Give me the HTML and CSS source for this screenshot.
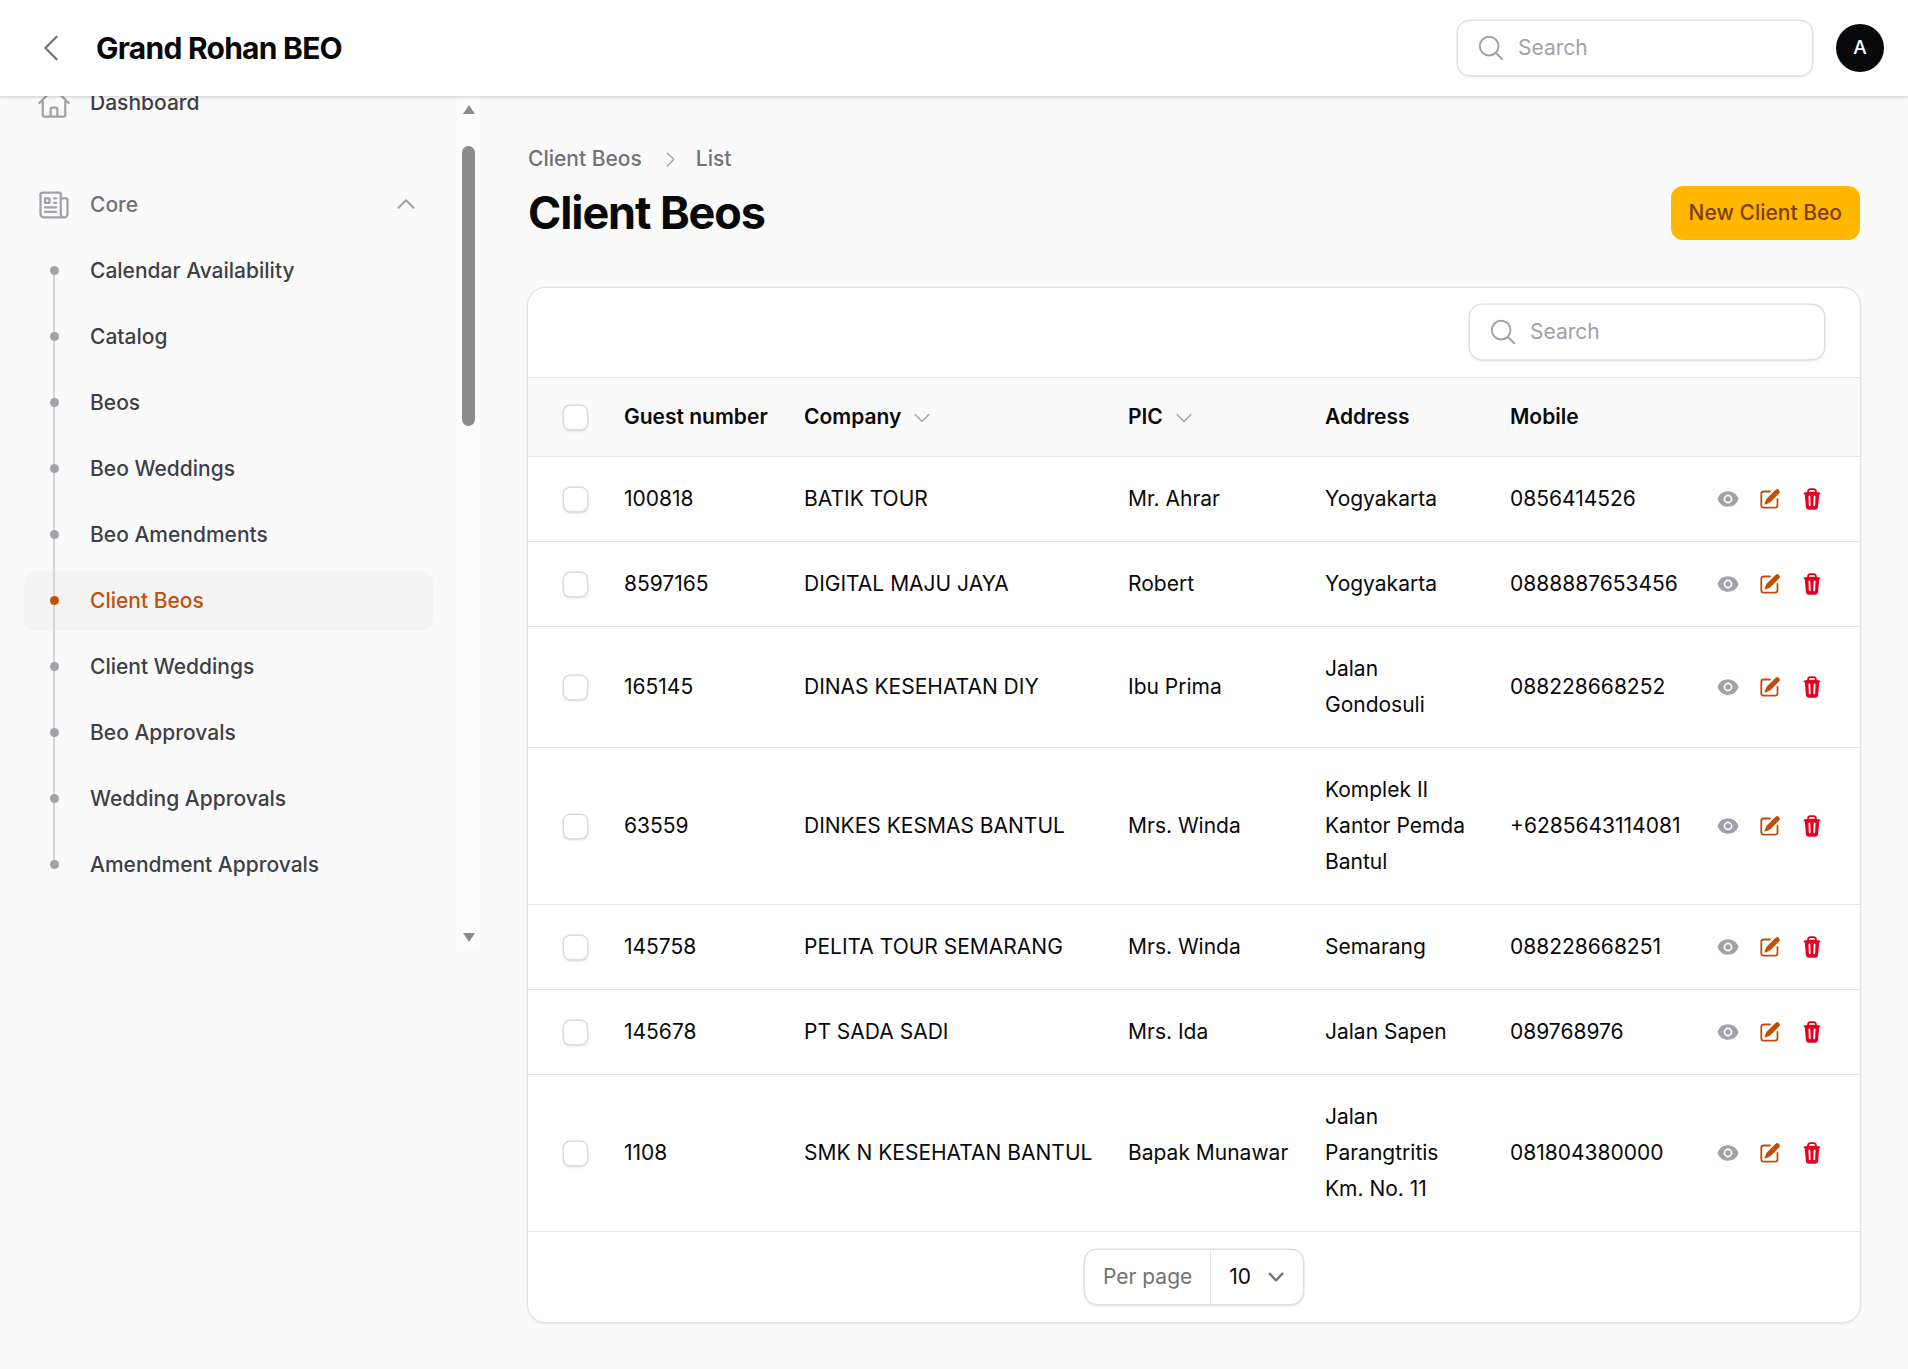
FILE: index.html
```html
<!DOCTYPE html>
<html lang="en">
<head>
    <meta charset="UTF-8">
    <meta name="viewport" content="width=device-width, initial-scale=1.0">
    <title>Client Beos - Grand Rohan BEO</title>
    <link rel="stylesheet" href="styles.css">
</head>
<body>
    <svg class="icon-defs" aria-hidden="true">
        <symbol id="i-search" viewBox="0 0 24 24"><path fill="none" stroke="currentColor" stroke-width="1.5" stroke-linecap="round" stroke-linejoin="round" d="M21 21l-5.197-5.197m0 0A7.5 7.5 0 105.196 5.196a7.5 7.5 0 0010.607 10.607z"/></symbol>
        <symbol id="i-down" viewBox="0 0 24 24"><path fill="none" stroke="currentColor" stroke-width="1.5" stroke-linecap="round" stroke-linejoin="round" d="M19.5 8.25l-7.5 7.5-7.5-7.5"/></symbol>
        <symbol id="i-eye" viewBox="0 0 20 20"><path fill="currentColor" d="M10 12.5a2.5 2.5 0 100-5 2.5 2.5 0 000 5z"/><path fill="currentColor" fill-rule="evenodd" d="M.664 10.59a1.651 1.651 0 010-1.186A10.004 10.004 0 0110 3c4.257 0 7.893 2.66 9.336 6.41.147.381.146.804 0 1.186A10.004 10.004 0 0110 17c-4.257 0-7.893-2.66-9.336-6.41zM14 10a4 4 0 11-8 0 4 4 0 018 0z"/></symbol>
        <symbol id="i-edit" viewBox="0 0 20 20"><path fill="currentColor" d="M5.433 13.917l1.262-3.155A4 4 0 017.58 9.42l6.92-6.918a2.121 2.121 0 013 3l-6.92 6.918c-.383.383-.84.685-1.343.886l-3.154 1.262a.5.5 0 01-.65-.65z"/><path fill="currentColor" d="M3.5 5.75c0-.69.56-1.25 1.25-1.25H10A.75.75 0 0010 3H4.75A2.75 2.75 0 002 5.75v9.5A2.75 2.75 0 004.75 18h9.5A2.75 2.75 0 0017 15.25V10a.75.75 0 00-1.5 0v5.25c0 .69-.56 1.25-1.25 1.25h-9.5c-.69 0-1.25-.56-1.25-1.25v-9.5z"/></symbol>
        <symbol id="i-trash" viewBox="0 0 20 20"><path fill="currentColor" fill-rule="evenodd" d="M8.75 1A2.75 2.75 0 006 3.75v.443c-.795.077-1.584.176-2.365.298a.75.75 0 10.23 1.482l.149-.022.841 10.518A2.75 2.75 0 007.596 19h4.807a2.75 2.75 0 002.742-2.53l.841-10.52.149.023a.75.75 0 00.23-1.482A41.03 41.03 0 0014 4.193V3.75A2.75 2.75 0 0011.25 1h-2.5zM10 4c.84 0 1.673.025 2.5.075V3.75c0-.69-.56-1.25-1.25-1.25h-2.5c-.69 0-1.25.56-1.25 1.25v.325C8.327 4.025 9.16 4 10 4zM8.58 7.72a.75.75 0 00-1.5.06l.3 7.5a.75.75 0 101.5-.06l-.3-7.5zm4.34.06a.75.75 0 10-1.5-.06l-.3 7.5a.75.75 0 101.5.06l.3-7.5z"/></symbol>
    </svg>

    <header class="topbar">
        <svg class="back-icon" viewBox="0 0 24 24"><path fill="none" stroke="currentColor" stroke-width="1.5" stroke-linecap="round" stroke-linejoin="round" d="M15.75 19.5L8.25 12l7.5-7.5"/></svg>
        <div class="brand">Grand Rohan BEO</div>
        <div class="search-box">
            <svg class="search-icon"><use href="#i-search"/></svg>
            <span>Search</span>
        </div>
        <div class="avatar">A</div>
    </header>

    <div class="layout">
        <aside class="sidebar">
            <nav class="side-nav">
                <a class="nav-top">
                    <svg class="nav-icon" viewBox="0 0 24 24"><path fill="none" stroke="currentColor" stroke-width="1.5" stroke-linecap="round" stroke-linejoin="round" d="M2.25 12l8.954-8.955c.44-.439 1.152-.439 1.591 0L21.75 12M4.5 9.75v10.125c0 .621.504 1.125 1.125 1.125H9.75v-4.875c0-.621.504-1.125 1.125-1.125h2.25c.621 0 1.125.504 1.125 1.125V21h4.125c.621 0 1.125-.504 1.125-1.125V9.75M8.25 21h8.25"/></svg>
                    <span>Dashboard</span>
                </a>
                <div class="nav-group-head">
                    <svg class="nav-icon" viewBox="0 0 24 24"><path fill="none" stroke="currentColor" stroke-width="1.5" stroke-linecap="round" stroke-linejoin="round" d="M12 7.5h1.5m-1.5 3h1.5m-7.5 3h7.5m-7.5 3h7.5m3-9h3.375c.621 0 1.125.504 1.125 1.125V18a2.25 2.25 0 01-2.25 2.25M16.5 7.5V18a2.25 2.25 0 002.25 2.25M16.5 7.5V4.875c0-.621-.504-1.125-1.125-1.125H4.125C3.504 3.75 3 4.254 3 4.875V18a2.25 2.25 0 002.25 2.25h13.5M6 7.5h3v3H6v-3z"/></svg>
                    <span>Core</span>
                    <svg class="group-chevron" viewBox="0 0 24 24"><path fill="none" stroke="currentColor" stroke-width="2" stroke-linecap="round" stroke-linejoin="round" d="M4.5 15.75l7.5-7.5 7.5 7.5"/></svg>
                </div>
                <ul class="nav-list">
                    <li class="nav-item">Calendar Availability</li>
                    <li class="nav-item">Catalog</li>
                    <li class="nav-item">Beos</li>
                    <li class="nav-item">Beo Weddings</li>
                    <li class="nav-item">Beo Amendments</li>
                    <li class="nav-item active">Client Beos</li>
                    <li class="nav-item">Client Weddings</li>
                    <li class="nav-item">Beo Approvals</li>
                    <li class="nav-item">Wedding Approvals</li>
                    <li class="nav-item">Amendment Approvals</li>
                </ul>
            </nav>
            <div class="side-scroll">
                <div class="arrow-up"></div>
                <div class="scroll-thumb"></div>
                <div class="arrow-down"></div>
            </div>
        </aside>

        <main class="content">
            <div class="breadcrumb">
                <span>Client Beos</span>
                <svg viewBox="0 0 24 24"><path fill="none" stroke="currentColor" stroke-width="1.5" stroke-linecap="round" stroke-linejoin="round" d="M8.25 4.5l7.5 7.5-7.5 7.5"/></svg>
                <span>List</span>
            </div>
            <div class="page-head">
                <h1>Client Beos</h1>
                <button class="btn-new">New Client Beo</button>
            </div>

            <section class="card">
                <div class="card-toolbar">
                    <div class="search-box">
                        <svg class="search-icon"><use href="#i-search"/></svg>
                        <span>Search</span>
                    </div>
                </div>
                <table class="data-table">
                    <colgroup>
                        <col class="c-check"><col class="c-guest"><col class="c-company"><col class="c-pic"><col class="c-address"><col class="c-mobile"><col class="c-actions">
                    </colgroup>
                    <thead>
                        <tr>
                            <th><span class="checkbox"></span></th>
                            <th>Guest number</th>
                            <th><span class="sort">Company <svg><use href="#i-down"/></svg></span></th>
                            <th><span class="sort">PIC <svg><use href="#i-down"/></svg></span></th>
                            <th>Address</th>
                            <th>Mobile</th>
                            <th></th>
                        </tr>
                    </thead>
                    <tbody>
                        <tr>
                            <td><span class="checkbox"></span></td>
                            <td>100818</td>
                            <td class="nowrap">BATIK TOUR</td>
                            <td>Mr. Ahrar</td>
                            <td>Yogyakarta</td>
                            <td class="nowrap">0856414526</td>
                            <td><div class="actions"><svg class="a-view"><use href="#i-eye"/></svg><svg class="a-edit"><use href="#i-edit"/></svg><svg class="a-del"><use href="#i-trash"/></svg></div></td>
                        </tr>
                        <tr>
                            <td><span class="checkbox"></span></td>
                            <td>8597165</td>
                            <td class="nowrap">DIGITAL MAJU JAYA</td>
                            <td>Robert</td>
                            <td>Yogyakarta</td>
                            <td class="nowrap">0888887653456</td>
                            <td><div class="actions"><svg class="a-view"><use href="#i-eye"/></svg><svg class="a-edit"><use href="#i-edit"/></svg><svg class="a-del"><use href="#i-trash"/></svg></div></td>
                        </tr>
                        <tr>
                            <td><span class="checkbox"></span></td>
                            <td>165145</td>
                            <td class="nowrap">DINAS KESEHATAN DIY</td>
                            <td>Ibu Prima</td>
                            <td>Jalan Gondosuli</td>
                            <td class="nowrap">088228668252</td>
                            <td><div class="actions"><svg class="a-view"><use href="#i-eye"/></svg><svg class="a-edit"><use href="#i-edit"/></svg><svg class="a-del"><use href="#i-trash"/></svg></div></td>
                        </tr>
                        <tr>
                            <td><span class="checkbox"></span></td>
                            <td>63559</td>
                            <td class="nowrap">DINKES KESMAS BANTUL</td>
                            <td>Mrs. Winda</td>
                            <td>Komplek II Kantor Pemda Bantul</td>
                            <td class="nowrap">+6285643114081</td>
                            <td><div class="actions"><svg class="a-view"><use href="#i-eye"/></svg><svg class="a-edit"><use href="#i-edit"/></svg><svg class="a-del"><use href="#i-trash"/></svg></div></td>
                        </tr>
                        <tr>
                            <td><span class="checkbox"></span></td>
                            <td>145758</td>
                            <td class="nowrap">PELITA TOUR SEMARANG</td>
                            <td>Mrs. Winda</td>
                            <td>Semarang</td>
                            <td class="nowrap">088228668251</td>
                            <td><div class="actions"><svg class="a-view"><use href="#i-eye"/></svg><svg class="a-edit"><use href="#i-edit"/></svg><svg class="a-del"><use href="#i-trash"/></svg></div></td>
                        </tr>
                        <tr>
                            <td><span class="checkbox"></span></td>
                            <td>145678</td>
                            <td class="nowrap">PT SADA SADI</td>
                            <td>Mrs. Ida</td>
                            <td>Jalan Sapen</td>
                            <td class="nowrap">089768976</td>
                            <td><div class="actions"><svg class="a-view"><use href="#i-eye"/></svg><svg class="a-edit"><use href="#i-edit"/></svg><svg class="a-del"><use href="#i-trash"/></svg></div></td>
                        </tr>
                        <tr>
                            <td><span class="checkbox"></span></td>
                            <td>1108</td>
                            <td class="nowrap">SMK N KESEHATAN BANTUL</td>
                            <td>Bapak Munawar</td>
                            <td>Jalan Parangtritis Km. No. 11</td>
                            <td class="nowrap">081804380000</td>
                            <td><div class="actions"><svg class="a-view"><use href="#i-eye"/></svg><svg class="a-edit"><use href="#i-edit"/></svg><svg class="a-del"><use href="#i-trash"/></svg></div></td>
                        </tr>
                    </tbody>
                </table>
                <div class="card-footer">
                    <div class="per-page">
                        <span class="per-label">Per page</span>
                        <span class="per-value">10 <svg viewBox="0 0 20 20"><path fill="currentColor" fill-rule="evenodd" d="M5.23 7.21a.75.75 0 011.06.02L10 11.168l3.71-3.938a.75.75 0 111.08 1.04l-4.25 4.5a.75.75 0 01-1.08 0l-4.25-4.5a.75.75 0 01.02-1.06z"/></svg></span>
                    </div>
                </div>
            </section>
        </main>
    </div>
</body>
</html>
```

FILE: styles.css
```css
* {
    box-sizing: border-box;
}
body {
    margin: 0;
    background-color: #fafafa;
    color: #09090b;
    font-family: Inter, "Noto Sans", sans-serif;
    font-size: 21px;
    line-height: 30px;
}
.icon-defs {
    display: none;
}

/* Top bar */
.topbar {
    position: relative;
    z-index: 2;
    display: flex;
    align-items: center;
    height: 96px;
    padding: 0 24px 0 33px;
    background-color: #ffffff;
    box-shadow: 0 1.5px 2px rgba(0, 0, 0, 0.12);
}
.back-icon {
    width: 36px;
    height: 36px;
    color: #71717a;
}
.brand {
    flex: 1;
    margin-left: 27px;
    font-size: 30px;
    font-weight: 700;
    letter-spacing: -0.75px;
}
.search-box {
    display: flex;
    align-items: center;
    width: 354px;
    height: 54px;
    padding-left: 18px;
    background-color: #ffffff;
    border-radius: 12px;
    box-shadow: 0 0 0 1.5px #e0e0e3, 0 1.5px 3px rgba(0, 0, 0, 0.1);
    color: #a1a1aa;
}
.search-icon {
    width: 30px;
    height: 30px;
    margin-right: 12px;
}
.avatar {
    display: flex;
    align-items: center;
    justify-content: center;
    width: 48px;
    height: 48px;
    margin-left: 24px;
    border-radius: 50%;
    background-color: #09090b;
    color: #ffffff;
    font-size: 19px;
    font-weight: 500;
}

.layout {
    display: flex;
    align-items: flex-start;
}

/* Sidebar */
.sidebar {
    display: flex;
    flex: none;
    width: 480px;
    height: 854px;
    padding-left: 24px;
    overflow: hidden;
}
.side-nav {
    width: 409px;
    margin-top: -23px;
    margin-right: 24px;
}
.nav-top,
.nav-group-head {
    display: flex;
    align-items: center;
    height: 60px;
    padding-left: 12px;
    color: #3f3f46;
    font-weight: 500;
}
.nav-group-head {
    margin-top: 42px;
    margin-bottom: 6px;
    color: #71717a;
}
.nav-icon {
    flex: none;
    width: 36px;
    height: 36px;
    margin-right: 18px;
    color: #a1a1aa;
}
.group-chevron {
    width: 24px;
    height: 24px;
    margin-left: auto;
    margin-right: 15px;
    margin-bottom: 2px;
    color: #a1a1aa;
}
.nav-list {
    margin: 0;
    padding: 0;
    list-style: none;
}
.nav-item {
    position: relative;
    display: flex;
    align-items: center;
    height: 60px;
    margin-bottom: 6px;
    padding-left: 66px;
    border-radius: 12px;
    color: #3f3f46;
    font-weight: 500;
}
.nav-item::before {
    content: "";
    position: absolute;
    left: 29px;
    top: -6px;
    bottom: 0;
    width: 2px;
    background-color: #d4d4d8;
}
.nav-item:first-child::before {
    top: 30px;
}
.nav-item:last-child::before {
    bottom: 30px;
}
.nav-item::after {
    content: "";
    position: absolute;
    left: 25.5px;
    top: 25px;
    width: 9px;
    height: 9px;
    border-radius: 50%;
    background-color: #a1a1aa;
}
.nav-item.active {
    background-color: #f4f4f5;
    color: #c2500a;
}
.nav-item.active::after {
    background-color: #c2500a;
}
.side-scroll {
    display: flex;
    flex: none;
    flex-direction: column;
    align-items: center;
    width: 23px;
    background-color: #fcfcfc;
}
.arrow-up,
.arrow-down {
    width: 0;
    height: 0;
    border-left: 6px solid transparent;
    border-right: 6px solid transparent;
}
.arrow-up {
    margin-top: 9px;
    border-bottom: 9px solid #8c8c8c;
}
.arrow-down {
    margin-top: 507px;
    border-top: 9px solid #8c8c8c;
}
.scroll-thumb {
    width: 13px;
    height: 280px;
    margin-top: 32px;
    border-radius: 7px;
    background-color: #8c8c8c;
}

/* Page content */
.content {
    flex: 1;
    min-width: 0;
    padding: 48px 48px 46px;
}
.breadcrumb {
    display: flex;
    align-items: center;
    color: #71717a;
    font-weight: 500;
}
.breadcrumb svg {
    width: 21px;
    height: 21px;
    margin: 0 15px 0 18px;
    color: #a1a1aa;
}
.page-head {
    display: flex;
    align-items: center;
    justify-content: space-between;
    margin-top: 12px;
    margin-bottom: 48px;
}
h1 {
    margin: 0;
    font-size: 45px;
    line-height: 54px;
    font-weight: 700;
    letter-spacing: -1.1px;
}
.btn-new {
    height: 54px;
    padding: 0 18px 2px;
    border: none;
    border-radius: 12px;
    background-color: #ffb700;
    color: #7c3d06;
    font-family: inherit;
    font-size: 21px;
    font-weight: 500;
}

/* Table card */
.card {
    background-color: #ffffff;
    border-radius: 18px;
    box-shadow: 0 0 0 1.5px #e4e4e7, 0 1.5px 3px rgba(0, 0, 0, 0.08);
    overflow: hidden;
}
.card-toolbar {
    display: flex;
    justify-content: flex-end;
    height: 89px;
    padding: 17px 36px 0 0;
}
.data-table {
    width: 100%;
    border-collapse: collapse;
    table-layout: fixed;
}
.c-check { width: 78px; }
.c-guest { width: 180px; }
.c-company { width: 324px; }
.c-pic { width: 197px; }
.c-address { width: 185px; }
.c-mobile { width: 200px; }
.c-actions { width: 168px; }
.data-table th {
    height: 79px;
    padding: 0 18px;
    background-color: #fafafa;
    border-top: 1.5px solid #e4e4e7;
    border-bottom: 1.5px solid #e4e4e7;
    font-weight: 600;
    text-align: left;
}
.data-table td {
    padding: 24px 18px;
    border-bottom: 1.5px solid #e4e4e7;
    line-height: 36px;
    vertical-align: middle;
}
.data-table th:first-child,
.data-table td:first-child {
    padding: 1px 0 0 36px;
}
.nowrap {
    white-space: nowrap;
}
.checkbox {
    display: block;
    width: 23px;
    height: 23px;
    background-color: #ffffff;
    border-radius: 6px;
    box-shadow: 0 0 0 1.5px #dcdce0, 0 1.5px 3px rgba(0, 0, 0, 0.16);
}
.sort {
    display: inline-flex;
    align-items: center;
}
.sort svg {
    width: 22px;
    height: 22px;
    margin-top: 1px;
    margin-left: 10px;
    color: #a1a1aa;
}
.actions {
    display: flex;
    align-items: center;
    justify-content: flex-end;
    gap: 18px;
    margin-right: 18px;
}
.actions svg {
    width: 24px;
    height: 24px;
}
.actions .a-view {
    width: 22px;
    height: 22px;
    margin-right: 1px;
    color: #a1a1aa;
}
.a-edit { color: #bf4f08; }
.a-del { color: #e6001f; }
.card-footer {
    display: flex;
    justify-content: center;
    align-items: center;
    height: 90px;
}
.per-page {
    display: flex;
    align-items: center;
    height: 54px;
    border-radius: 12px;
    box-shadow: 0 0 0 1.5px #e0e0e3, 0 1.5px 3px rgba(0, 0, 0, 0.1);
}
.per-label {
    display: flex;
    align-items: center;
    height: 100%;
    padding: 0 18px;
    border-right: 1.5px solid #e4e4e7;
    color: #71717a;
}
.per-value {
    display: flex;
    align-items: center;
    padding: 0 12px 0 18px;
}
.per-value svg {
    width: 30px;
    height: 30px;
    margin-left: 10px;
    color: #71717a;
}
```
